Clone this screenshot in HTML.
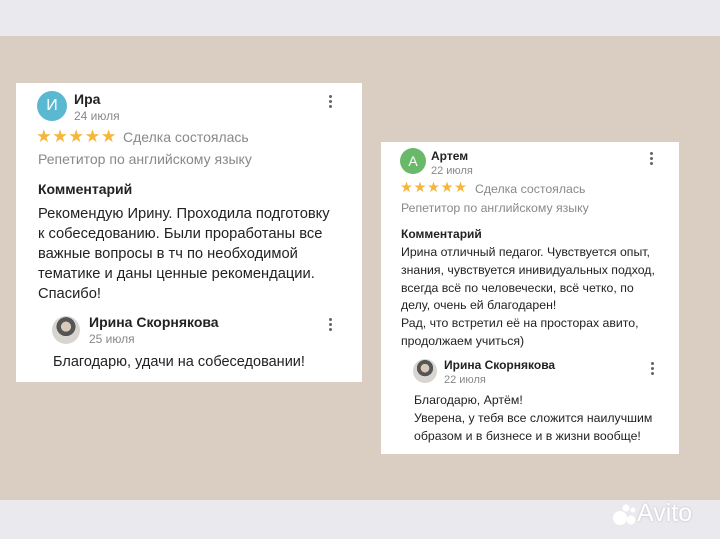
<!DOCTYPE html><html><head><meta charset="utf-8"><style>
*{margin:0;padding:0;box-sizing:border-box}
body{width:720px;height:539px;position:relative;overflow:hidden;background:#e9e9ee;font-family:"Liberation Sans",sans-serif;color:#222}
.bg{position:absolute;left:0;top:36px;width:720px;height:464px;background:#dacdc2}
.card{position:absolute;background:#fff}
.t{position:absolute;white-space:nowrap;line-height:1}
.av{position:absolute;border-radius:50%;color:#fff;text-align:center}
.ph{position:absolute;border-radius:50%;background:radial-gradient(circle at 50% 38%,#d9c9b9 0 22%,#555 23% 42%,#d8d4d0 43%)}
.dots{position:absolute;width:3px}
.dots i{display:block;width:3px;height:3px;border-radius:50%;background:#666;margin-bottom:2px}
.g{color:#888}
.st{color:#f4b73b}
</style></head><body>
<div class="bg"></div>
<div class="card" style="left:16px;top:83px;width:346px;height:299px"></div>
<div class="av" style="left:37px;top:91px;width:30px;height:30px;background:#5ab8d0;font-size:16px;line-height:30px">И</div>
<div class="t" style="left:74px;top:92px;font-size:14px;font-weight:bold">Ира</div>
<div class="t g" style="left:74px;top:110px;font-size:12px">24 июля</div>
<div class="dots" style="left:329px;top:95px"><i></i><i></i><i></i></div>
<div class="t st" style="left:36px;top:128px;font-size:17.5px;letter-spacing:0.5px">★★★★★</div>
<div class="t g" style="left:123px;top:130px;font-size:14px">Сделка состоялась</div>
<div class="t g" style="left:38px;top:152px;font-size:14px">Репетитор по английскому языку</div>
<div class="t" style="left:38px;top:182px;font-size:14px;font-weight:bold">Комментарий</div>
<div class="t" style="left:38px;top:204px;font-size:14.7px;line-height:20px;white-space:pre">Рекомендую Ирину. Проходила подготовку
к собеседованию. Были проработаны все
важные вопросы в тч по необходимой
тематике и даны ценные рекомендации.
Спасибо!</div>
<div class="ph" style="left:52px;top:316px;width:28px;height:28px"></div>
<div class="t" style="left:89px;top:315px;font-size:14px;font-weight:bold">Ирина Скорнякова</div>
<div class="t g" style="left:89px;top:333px;font-size:12px">25 июля</div>
<div class="dots" style="left:329px;top:318px"><i></i><i></i><i></i></div>
<div class="t" style="left:53px;top:355px;font-size:14.5px">Благодарю, удачи на собеседовании!</div>

<div class="card" style="left:381px;top:142px;width:298px;height:312px"></div>
<div class="av" style="left:400px;top:148px;width:26px;height:26px;background:#6ab86a;font-size:14px;line-height:26px">А</div>
<div class="t" style="left:431px;top:150px;font-size:12px;font-weight:bold">Артем</div>
<div class="t g" style="left:431px;top:166px;font-size:11px">22 июля</div>
<div class="dots" style="left:650px;top:152px"><i></i><i></i><i></i></div>
<div class="t st" style="left:400px;top:181px;font-size:14.5px;letter-spacing:0.5px">★★★★★</div>
<div class="t g" style="left:475px;top:183px;font-size:12.3px">Сделка состоялась</div>
<div class="t g" style="left:401px;top:202px;font-size:12.3px">Репетитор по английскому языку</div>
<div class="t" style="left:401px;top:228px;font-size:12px;font-weight:bold">Комментарий</div>
<div class="t" style="left:401px;top:244px;font-size:12.3px;line-height:17.8px;white-space:pre">Ирина отличный педагог. Чувствуется опыт,
знания, чувствуется инивидуальных подход,
всегда всё по человечески, всё четко, по
делу, очень ей благодарен!
Рад, что встретил её на просторах авито,
продолжаем учиться)</div>
<div class="ph" style="left:413px;top:359px;width:24px;height:24px"></div>
<div class="t" style="left:444px;top:359px;font-size:12px;font-weight:bold">Ирина Скорнякова</div>
<div class="t g" style="left:444px;top:375px;font-size:11px">22 июля</div>
<div class="dots" style="left:651px;top:362px"><i></i><i></i><i></i></div>
<div class="t" style="left:414px;top:391px;font-size:12.3px;line-height:18px;white-space:pre">Благодарю, Артём!
Уверена, у тебя все сложится наилучшим
образом и в бизнесе и в жизни вообще!</div>

<svg style="position:absolute;left:612px;top:500px" width="26" height="28"><circle cx="8" cy="18" r="7" fill="#fff"/><circle cx="19" cy="20" r="4.5" fill="#fff"/><circle cx="14" cy="8" r="3.5" fill="#fff"/><circle cx="21" cy="10" r="2.5" fill="#fff"/></svg>
<div class="t" style="left:637px;top:501px;font-size:25px;color:#fff;text-shadow:0 0 2px #bbb">Avito</div>
</body></html>
